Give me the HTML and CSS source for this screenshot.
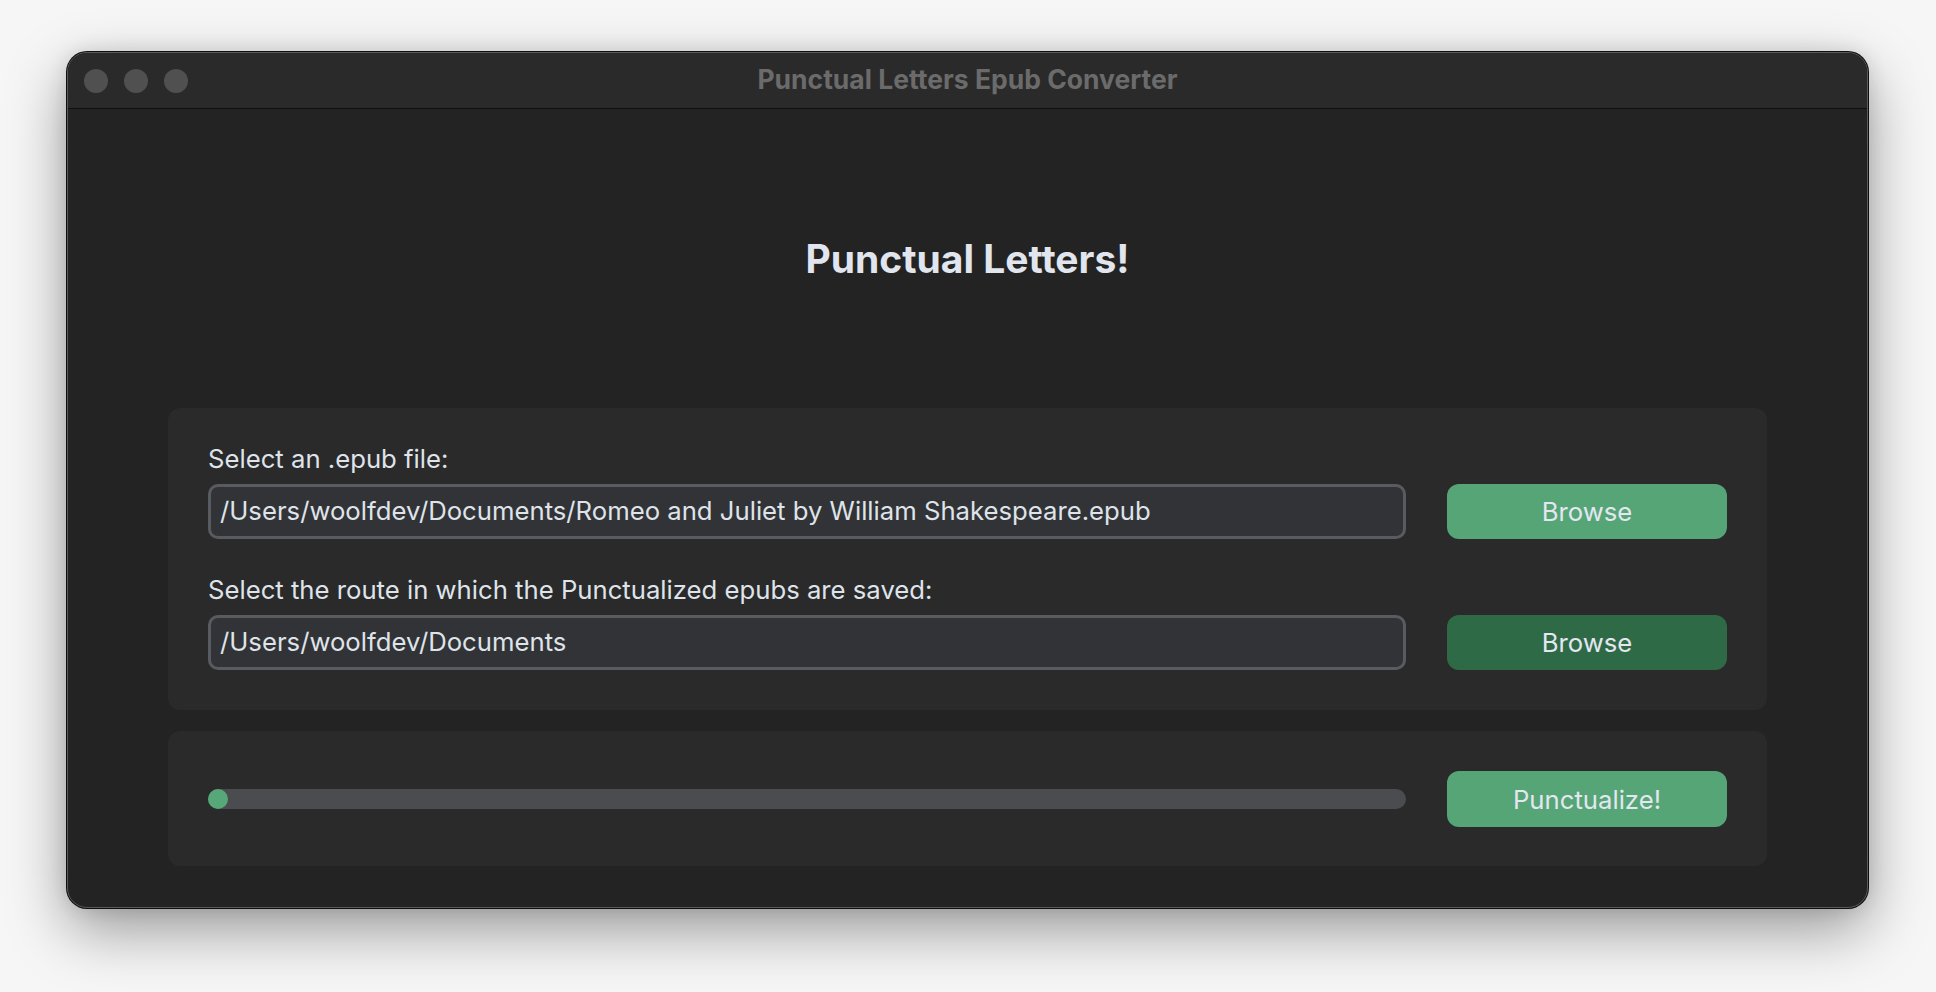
FILE: index.html
```html
<!DOCTYPE html>
<html lang="en">
<head>
<meta charset="utf-8">
<title>Punctual Letters Epub Converter</title>
<link rel="stylesheet" href="styles.css">
</head>
<body>
<div class="window">
  <div class="titlebar">
    <div class="lights">
      <span class="light"></span>
      <span class="light"></span>
      <span class="light"></span>
    </div>
    <div class="title">Punctual Letters Epub Converter</div>
  </div>
  <div class="content">
    <h1 class="heading">Punctual Letters!</h1>
    <section class="card card-files">
      <div class="field">
        <label class="label">Select an .epub file:</label>
        <div class="row">
          <div class="input">/Users/woolfdev/Documents/Romeo and Juliet by William Shakespeare.epub</div>
          <button class="btn btn-light">Browse</button>
        </div>
      </div>
      <div class="field">
        <label class="label">Select the route in which the Punctualized epubs are saved:</label>
        <div class="row">
          <div class="input">/Users/woolfdev/Documents</div>
          <button class="btn btn-dark">Browse</button>
        </div>
      </div>
    </section>
    <section class="card card-progress">
      <div class="row">
        <div class="progress">
          <div class="track"></div>
          <div class="dot"></div>
        </div>
        <button class="btn btn-light">Punctualize!</button>
      </div>
    </section>
  </div>
</div>
</body>
</html>
```
FILE: styles.css
```css
* { box-sizing: border-box; }
html, body { margin: 0; padding: 0; }
body {
  width: 1936px;
  height: 992px;
  background: #f6f6f6;
  font-family: Inter, "Noto Sans", "Liberation Sans", sans-serif;
  padding: 52px 68px 0 67px;
  overflow: hidden;
}
.window {
  width: 1801px;
  height: 856px;
  background: #232323;
  border-radius: 20px;
  border: 1px solid #5a5a5a;
  box-shadow: 0 0 0 1px #0e0e0e, 0 22px 60px rgba(0,0,0,0.38), 0 0 20px rgba(0,0,0,0.12);
  overflow: hidden;
  display: flex;
  flex-direction: column;
}
.titlebar {
  height: 56px;
  flex: none;
  background: #2a2a2a;
  border-bottom: 1px solid #0f0f0f;
  display: flex;
  align-items: center;
  position: relative;
}
.lights {
  display: flex;
  gap: 16px;
  padding-left: 16px;
  padding-top: 1px;
}
.light {
  width: 24px;
  height: 24px;
  border-radius: 50%;
  background: #505050;
}
.title {
  position: absolute;
  left: 0;
  right: 0;
  top: 0;
  bottom: 0;
  display: flex;
  align-items: center;
  justify-content: center;
  color: #6b6b6b;
  font-weight: 700;
  font-size: 26.5px;
  padding-bottom: 4px;
}
.content {
  flex: 1;
  padding: 0 100px;
  display: flex;
  flex-direction: column;
}
.heading {
  margin: 127px 0 126px;
  text-align: center;
  color: #e1e5ed;
  font-size: 39px;
  line-height: 46px;
  font-weight: 700;
}
.card {
  background: #2a2a2a;
  border-radius: 12px;
}
.card-files {
  padding: 36px 40px 40px 40px;
  display: flex;
  flex-direction: column;
  gap: 36px;
}
.field {
  display: flex;
  flex-direction: column;
  gap: 10px;
}
.label {
  color: #dfe3ea;
  font-size: 25.7px;
  line-height: 30px;
}
.row {
  display: flex;
  align-items: center;
  gap: 41px;
}
.input {
  flex: 1;
  height: 55px;
  border: 3px solid #585b60;
  border-radius: 10px;
  background: #323336;
  color: #dfe3ea;
  font-size: 25.7px;
  line-height: 48px;
  padding-left: 9px;
  white-space: nowrap;
  overflow: hidden;
}
.btn {
  flex: none;
  width: 280px;
  height: 55px;
  border: none;
  border-radius: 12px;
  font-family: inherit;
  font-size: 25.7px;
  color: #e3e7ef;
  padding: 0;
}
.btn-light { background: #55a577; }
.btn-dark { background: #2f6a47; }
.card-progress {
  margin-top: 21px;
  padding: 40px 40px 39px 40px;
}
.card-progress .btn { height: 56px; }
.progress {
  flex: 1;
  height: 20px;
  position: relative;
}
.track {
  height: 20px;
  border-radius: 10px;
  background: #4b4c50;
}
.dot {
  position: absolute;
  left: 0;
  top: 0;
  width: 20px;
  height: 20px;
  border-radius: 50%;
  background: #57a878;
}
```
